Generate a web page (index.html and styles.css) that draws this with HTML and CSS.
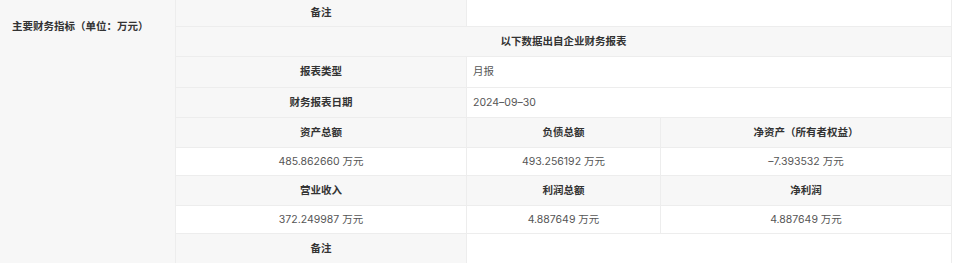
FILE: index.html
```html
<!DOCTYPE html>
<html lang="zh-CN">
<head>
<meta charset="utf-8">
<link rel="stylesheet" href="styles.css">
</head>
<body>
<div class="sheet">
  <div class="side">主要财务指标（单位：万元）</div>

  <div class="cell head r1">备注</div>
  <div class="cell val span2 r1"></div>

  <div class="cell head span3 r2">以下数据出自企业财务报表</div>

  <div class="cell head r3">报表类型</div>
  <div class="cell val span2 left r3">月报</div>

  <div class="cell head r4">财务报表日期</div>
  <div class="cell val span2 left r4">2024–09–30</div>

  <div class="cell head">资产总额</div>
  <div class="cell head">负债总额</div>
  <div class="cell head">净资产（所有者权益）</div>

  <div class="cell val">485.862660 万元</div>
  <div class="cell val">493.256192 万元</div>
  <div class="cell val">–7.393532 万元</div>

  <div class="cell head">营业收入</div>
  <div class="cell head">利润总额</div>
  <div class="cell head">净利润</div>

  <div class="cell val">372.249987 万元</div>
  <div class="cell val">4.887649 万元</div>
  <div class="cell val">4.887649 万元</div>

  <div class="cell head">备注</div>
  <div class="cell val span2"></div>
</div>
</body>
</html>
```

FILE: styles.css
```css
html, body {
  margin: 0;
  padding: 0;
  background: #ffffff;
}

body {
  font-family: "Inter", "Noto Sans CJK SC", sans-serif;
  font-size: 10.5px;
  color: #333333;
}

.sheet {
  display: grid;
  grid-template-columns: 175px 290px 193px 290px;
  grid-template-rows: 26px 29px 30px 29px 29px 27px 29px 27px 30px;
  gap: 1px;
  width: 951px;
  background: #ededed;
  border-right: 1px solid #ededed;
}

.side {
  grid-row: 1 / span 9;
  grid-column: 1;
  background: #f7f7f7;
  font-weight: 600;
  color: #333333;
  padding: 19px 0 0 12px;
  line-height: 16px;
}

.cell {
  display: flex;
  align-items: center;
  justify-content: center;
  line-height: 16px;
  white-space: nowrap;
}

.head {
  background: #f7f7f7;
  font-weight: 600;
  color: #333333;
}

.val {
  background: #ffffff;
  color: #555555;
}

.left {
  justify-content: flex-start;
  padding-left: 6px;
}

.span2 {
  grid-column: span 2;
}

.span3 {
  grid-column: span 3;
}
```
